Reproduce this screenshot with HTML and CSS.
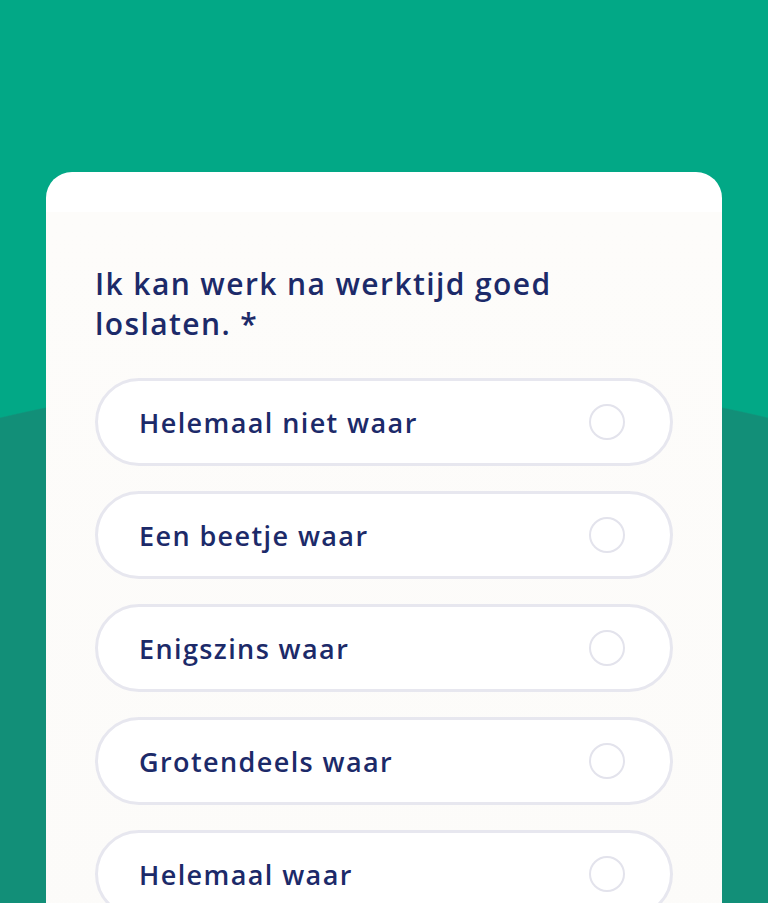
FILE: index.html
```html
<!DOCTYPE html>
<html lang="nl">
<head>
  <meta charset="UTF-8">
  <meta name="viewport" content="width=device-width, initial-scale=1.0">
  <title>Vragenlijst</title>
  <link rel="stylesheet" href="styles.css">
</head>
<body>
  <main class="page">
    <section class="card">
      <div class="card-head"></div>
      <div class="card-body">
        <h1 class="question">Ik kan werk na werktijd goed loslaten. *</h1>
        <div class="options">
          <label class="option"><span>Helemaal niet waar</span><i class="radio"></i></label>
          <label class="option"><span>Een beetje waar</span><i class="radio"></i></label>
          <label class="option"><span>Enigszins waar</span><i class="radio"></i></label>
          <label class="option"><span>Grotendeels waar</span><i class="radio"></i></label>
          <label class="option"><span>Helemaal waar</span><i class="radio"></i></label>
        </div>
      </div>
    </section>
  </main>
</body>
</html>
```

FILE: styles.css
```css
html, body { margin: 0; height: 100%; }
body {
  font-family: "Open Sans", "Liberation Sans", sans-serif;
  color: #1c2a69;
  background:
    radial-gradient(ellipse 1100px 700px at 50% 1073px, #128f78 99.8%, transparent 100%),
    #02a886;
  overflow: hidden;
}
.page {
  padding: 172px 46px 0;
}
.card {
  background: #fff;
  border-radius: 26px 26px 0 0;
  min-height: 760px;
}
.card-head { height: 40px; }
.card-body {
  background: linear-gradient(#fdfcfa, #fcfbf9);
  padding: 52px 49px 0;
  min-height: 700px;
}
.question {
  max-width: 520px;
  margin: 0 0 34px;
  font-size: 30px;
  line-height: 40px;
  font-weight: 600;
  letter-spacing: 1.4px;
}
.options {
  display: flex;
  flex-direction: column;
  gap: 25px;
}
.option {
  display: flex;
  align-items: center;
  justify-content: space-between;
  height: 82px;
  padding: 0 45px 0 41px;
  background: #fff;
  border: 3px solid #e7e7ef;
  border-radius: 46px;
  font-size: 27px;
  font-weight: 600;
  letter-spacing: 1.4px;
}
.radio {
  width: 32px;
  height: 32px;
  border: 2.5px solid #e3e3ec;
  border-radius: 50%;
}
```
